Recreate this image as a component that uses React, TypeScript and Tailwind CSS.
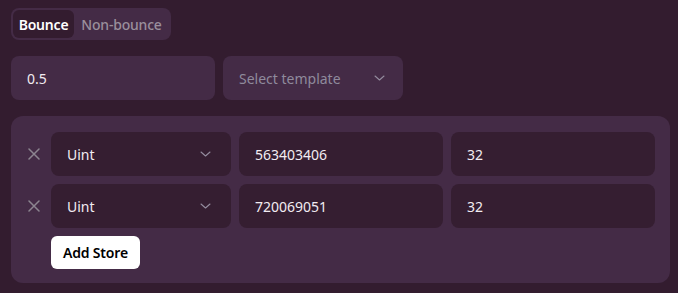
type Store = { type: string; value: string; bits: string };

const stores: Store[] = [
  { type: "Uint", value: "563403406", bits: "32" },
  { type: "Uint", value: "720069051", bits: "32" },
];

function Chevron() {
  return (
    <svg width="11" height="6" viewBox="0 0 11 6" fill="none" className="text-[#948c9e]">
      <path d="M1 1 L5.5 5 L10 1" stroke="currentColor" strokeWidth="1.1" strokeLinecap="round" strokeLinejoin="round" />
    </svg>
  );
}

function Cross() {
  return (
    <svg width="12" height="12" viewBox="0 0 12 12" fill="none" className="text-[#8c8590]">
      <path d="M1 1 L11 11 M11 1 L1 11" stroke="currentColor" strokeWidth="1.5" strokeLinecap="round" />
    </svg>
  );
}

export default function App() {
  return (
    <div
      className="min-h-[293px] w-full bg-[#331c2f] px-[11px] pt-2 text-[14px] text-[#f2ecf1]"
      style={{ fontFamily: '"Noto Sans", "Open Sans", sans-serif' }}
    >
      <div className="inline-flex h-8 w-[160px] items-center rounded-lg bg-[#442b46] p-0.5">
        <button className="h-7 w-[61px] rounded-md bg-[#331c2f] text-center font-semibold tracking-[-0.2px] text-white">
          Bounce
        </button>
        <button className="h-7 flex-1 rounded-md text-center font-medium tracking-[-0.2px] text-[#9a8f9c]">
          Non-bounce
        </button>
      </div>

      <div className="mt-4 flex gap-2">
        <div className="flex h-11 w-[204px] items-center rounded-lg bg-[#442b46] px-4">0.5</div>
        <div className="flex h-11 w-[180px] items-center justify-between rounded-lg bg-[#442b46] pl-4 pr-[18px] text-[#8f8a9c]">
          <span>Select template</span>
          <Chevron />
        </div>
      </div>

      <div className="mt-4 w-[659px] rounded-xl bg-[#442b46] pb-[14px] pl-4 pr-[15px] pt-4">
        <div className="flex flex-col gap-2">
          {stores.map((s, i) => (
            <div key={i} className="flex items-center">
              <div className="flex w-[24px] items-center pl-[1px]">
                <Cross />
              </div>
              <div className="flex h-11 w-[180px] items-center justify-between rounded-lg bg-[#351e31] pl-4 pr-[20px]">
                <span>{s.type}</span>
                <Chevron />
              </div>
              <div className="ml-2 flex h-11 w-[204px] items-center rounded-lg bg-[#351e31] px-4">{s.value}</div>
              <div className="ml-2 flex h-11 w-[204px] items-center rounded-lg bg-[#351e31] px-4">{s.bits}</div>
            </div>
          ))}
        </div>
        <button className="ml-6 mt-2 h-[33px] w-[89px] rounded-md bg-white text-center font-semibold tracking-[-0.2px] text-black">
          Add Store
        </button>
      </div>
    </div>
  );
}
